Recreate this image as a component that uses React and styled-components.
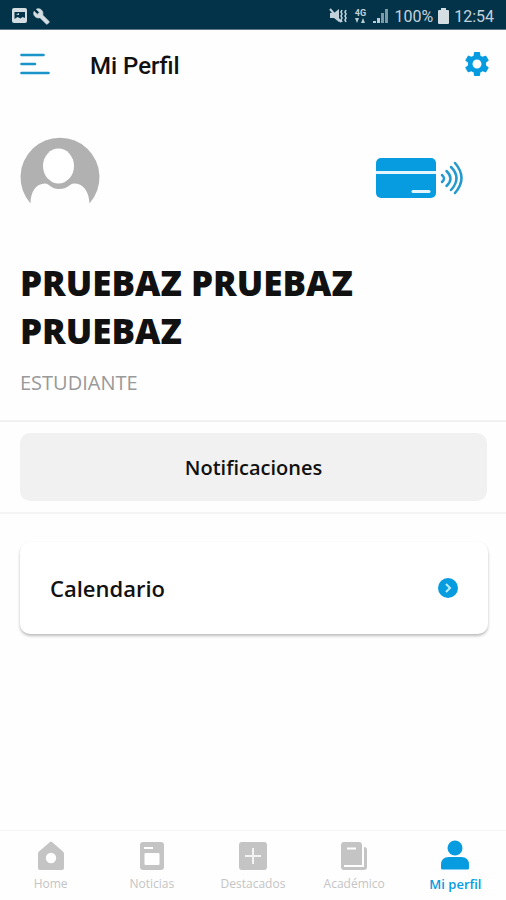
import styled, { createGlobalStyle } from "styled-components";

const tabs = [
    { label: "Home", icon: HomeIcon },
    { label: "Noticias", icon: NewsIcon },
    { label: "Destacados", icon: PlusIcon },
    { label: "Académico", icon: BookIcon },
    { label: "Mi perfil", icon: PersonIcon, active: true },
];

function App() {
    return (
        <Page>
            <GlobalStyle />
            <StatusBar>
                <StatusGroup>
                    <PictureIcon />
                    <WrenchIcon />
                </StatusGroup>
                <StatusGroup>
                    <MuteIcon />
                    <NetworkType>
                        <span>4G</span>
                        <ArrowsIcon />
                    </NetworkType>
                    <SignalIcon />
                    <span>100%</span>
                    <BatteryIcon />
                    <span>12:54</span>
                </StatusGroup>
            </StatusBar>
            <Header>
                <IconButton aria-label="Menú">
                    <MenuIcon />
                </IconButton>
                <h1>Mi Perfil</h1>
                <IconButton aria-label="Ajustes">
                    <GearIcon />
                </IconButton>
            </Header>
            <Main>
                <Profile>
                    <div className="top">
                        <AvatarIcon />
                        <IconButton aria-label="Credencial">
                            <CardIcon />
                        </IconButton>
                    </div>
                    <h2>PRUEBAZ PRUEBAZ PRUEBAZ</h2>
                    <p>ESTUDIANTE</p>
                </Profile>
                <Notifications>
                    <button>Notificaciones</button>
                </Notifications>
                <CardButton>
                    <span>Calendario</span>
                    <ChevronIcon />
                </CardButton>
            </Main>
            <TabBar>
                {tabs.map(({ label, icon: Icon, active }) => (
                    <Tab key={label} href="#" $active={active} aria-current={active ? "page" : undefined}>
                        <Icon />
                        <span>{label}</span>
                    </Tab>
                ))}
            </TabBar>
        </Page>
    )
}

export default App;

function PictureIcon() {
    return (
        <svg width="16" height="16" viewBox="0 0 16 16">
            <rect x="0" y="0" width="15" height="15" rx="2" fill="#d3dde2" />
            <path d="M2.500 4h10.500v6l-2.500-1-2 1.500-3-1.500-3 2z" fill="#033349" />
            <path d="M4 6.500l3-1.500v2z" fill="#d3dde2" />
        </svg>
    )
}

function WrenchIcon() {
    return (
        <svg width="17" height="17" viewBox="0 0 24 24" fill="#d3dde2" stroke="#d3dde2">
            <path d="M22.700 19l-9.100-9.100c.9-2.300.4-5-1.500-6.900-2-2-5-2.400-7.400-1.300L9 6 6 9 1.600 4.700C.4 7.100.9 10.100 2.900 12.100c1.900 1.900 4.600 2.400 6.900 1.500l9.100 9.100c.4.400 1 .4 1.400 0l2.300-2.300c.5-.4.500-1.100.1-1.400z" />
        </svg>
    )
}

function MuteIcon() {
    return (
        <svg width="17" height="16" viewBox="0 0 17 16">
            <path d="M0 5h4l5-4v13l-5-4H0z" fill="#c3d2da" />
            <path d="M0 1l11 13" stroke="#c3d2da" strokeWidth="2" />
            <path d="M12 2l-1 2 1 2-1 2 1 2-1 2 1 2M16 2l-1 2 1 2-1 2 1 2-1 2 1 2" stroke="#c3d2da" strokeWidth="1.600" fill="none" />
        </svg>
    )
}

function ArrowsIcon() {
    return (
        <svg width="10" height="5" viewBox="0 0 10 5" fill="#b9cbd4">
            <path d="M0 0h4L2 5zM6 5h4L8 0z" />
        </svg>
    )
}

function SignalIcon() {
    return (
        <svg width="16" height="16" viewBox="0 0 16 16">
            <path d="M0 13h3v2H0zM4 10h3v5H4z" fill="#b9cbd4" />
            <path d="M8 5h3v10H8zM12 1h3v14h-3z" fill="#7e99a6" />
        </svg>
    )
}

function BatteryIcon() {
    return (
        <svg width="11" height="16" viewBox="0 0 11 16" fill="#d3dde2">
            <path d="M3 0h5v2h2a1 1 0 0 1 1 1v12a1 1 0 0 1-1 1H1a1 1 0 0 1-1-1V3a1 1 0 0 1 1-1h2z" />
        </svg>
    )
}

function MenuIcon() {
    return (
        <svg width="30" height="22" viewBox="0 0 30 22" stroke="#1b94c9" strokeWidth="2.600" strokeLinecap="round">
            <path d="M1.500 2h22M1.500 11H15M1.500 20h27" />
        </svg>
    )
}

function GearIcon() {
    return (
        <svg width="30" height="30" viewBox="0 0 24 24" fill="#079be0">
            <path d="M19.140 12.940c.04-.3.060-.61.060-.94 0-.32-.02-.64-.07-.94l2.030-1.580c.18-.14.230-.41.120-.61l-1.920-3.320c-.12-.22-.37-.29-.59-.22l-2.390.96c-.5-.38-1.030-.7-1.620-.94l-.36-2.540c-.04-.24-.24-.41-.48-.41h-3.840c-.24 0-.43.170-.47.410l-.36 2.540c-.59.240-1.130.570-1.620.940l-2.390-.96c-.22-.08-.47 0-.59.220L2.740 8.870c-.12.210-.08.470.120.610l2.030 1.580c-.05.300-.09.630-.09.940s.02.640.070.940l-2.030 1.580c-.18.140-.23.410-.12.610l1.920 3.320c.12.220.37.290.59.220l2.390-.96c.5.380 1.030.7 1.620.94l.36 2.540c.05.240.24.410.48.410h3.840c.24 0 .44-.17.47-.41l.36-2.540c.59-.24 1.130-.56 1.620-.94l2.390.96c.22.080.47 0 .59-.22l1.920-3.320c.12-.22.070-.47-.12-.61l-2.010-1.580zM12 15.600c-1.980 0-3.600-1.620-3.600-3.600s1.620-3.600 3.600-3.600 3.600 1.620 3.600 3.600-1.620 3.600-3.600 3.600z" />
        </svg>
    )
}

function AvatarIcon() {
    return (
        <svg width="80" height="66" viewBox="0 0 80 66">
            <path d="M10.500 65.500A39.500 39.500 0 1 1 69.500 65.500C69 53 63 45.500 54 45.500C50 45.500 48 51 39 51C31 51 29 45.500 25 45.500C16 45.500 10.500 54 10.500 65.500Z" fill="#b1b1b1" />
            <ellipse cx="38.500" cy="28" rx="15.500" ry="17.500" fill="#fff" />
        </svg>
    )
}

function CardIcon() {
    return (
        <svg width="88" height="42" viewBox="0 0 88 42" fill="none" strokeLinecap="round">
            <rect x="0" y="1" width="60" height="40" rx="5" fill="#079be0" />
            <path d="M0 15.500h60" stroke="#e3f6ff" strokeWidth="3" strokeLinecap="butt" />
            <path d="M37 34.500h16" stroke="#e3f6ff" strokeWidth="3" />
            <path d="M66 18q4 3.500 0 7M70.500 14q8 7.500 0 15M75 10q11 11 0 23M79 6q13 15 0 30" stroke="#2499cd" strokeWidth="2.500" />
        </svg>
    )
}

function ChevronIcon() {
    return (
        <svg width="20" height="20" viewBox="0 0 20 20">
            <circle cx="10" cy="10" r="10" fill="#079be0" />
            <path d="M8 6l4 4-4 4" stroke="#b9ecff" strokeWidth="2" fill="none" />
        </svg>
    )
}

function HomeIcon() {
    return (
        <svg width="30" height="30" viewBox="0 0 30 30">
            <path d="M15 .5Q15.600.5 16 1L27 10.500Q28 11.300 28 12.500V27Q28 29 26 29H4Q2 29 2 27V12.500Q2 11.300 3 10.500L14 1Q14.400.5 15 .5Z" fill="currentColor" />
            <circle cx="15" cy="17" r="5.200" fill="#fff" />
        </svg>
    )
}

function NewsIcon() {
    return (
        <svg width="30" height="30" viewBox="0 0 30 30">
            <rect x="3" y="1" width="24" height="28" rx="3" fill="currentColor" />
            <path d="M7 7h9" stroke="#fff" strokeWidth="2" />
            <rect x="7.500" y="12" width="15" height="12" rx="1" fill="#fff" />
        </svg>
    )
}

function PlusIcon() {
    return (
        <svg width="30" height="30" viewBox="0 0 30 30">
            <rect x="1" y="1" width="28" height="28" rx="3" fill="currentColor" />
            <path d="M15 7v16M7 15h16" stroke="#f3f3f3" strokeWidth="2" />
        </svg>
    )
}

function BookIcon() {
    return (
        <svg width="30" height="30" viewBox="0 0 30 30">
            <path d="M5 1H20Q23 1 23 4V24H5V26H25V6Q28 6 28 9V26Q28 29 25 29H5Q2 29 2 26V4Q2 1 5 1Z" fill="currentColor" />
            <path d="M8 7.500h9" stroke="#fff" strokeWidth="2" />
        </svg>
    )
}

function PersonIcon() {
    return (
        <svg width="30" height="30" viewBox="0 0 30 30" fill="currentColor">
            <circle cx="15" cy="7" r="7.500" />
            <path d="M1 27V24Q1 16 9 16H21Q29 16 29 24V27Q29 28.500 27.500 28.500H2.500Q1 28.500 1 27Z" />
        </svg>
    )
}

const GlobalStyle = createGlobalStyle`
    * {
        box-sizing:border-box;
    }
    body {
        margin:0;
        background-color:#fefefe;
        color:#111;
        font-family:"Open Sans", sans-serif;
    }
    svg {
        display:block;
        flex-shrink:0;
        overflow:visible;
    }
    button {
        font-family:inherit;
        color:inherit;
        border:none;
        cursor:pointer;
    }
`;

const Page = styled.div`
    min-height:100vh;
    display:flex;
    flex-direction:column;
`;

const StatusBar = styled.div`
    height:30px;
    padding:3px 12px 0;
    display:flex;
    align-items:center;
    justify-content:space-between;
    background-color:#033349;
    color:#c3d2da;
    font-family:Roboto, sans-serif;
    font-size:16px;
    border-bottom:1px solid #5f7986;
`;

const StatusGroup = styled.div`
    display:flex;
    align-items:center;
    gap:5px;
`;

const NetworkType = styled.div`
    width:16px;
    display:flex;
    flex-direction:column;
    align-items:center;
    font-size:9px;
    line-height:9px;
    font-weight:700;
`;

const IconButton = styled.button`
    padding:0;
    background:none;
`;

const Header = styled.header`
    height:70px;
    padding:0 14px 2px 20px;
    display:flex;
    align-items:center;
    h1 {
        flex:1;
        margin:4px 0 0 40px;
        font-family:Roboto, sans-serif;
        font-size:24px;
        font-weight:500;
    }
`;

const Main = styled.main`
    flex:1;
`;

const Profile = styled.section`
    padding:38px 20px 23px;
    border-bottom:2px solid #f1f1f1;
    .top {
        display:flex;
        align-items:flex-end;
        justify-content:space-between;
        padding-right:22px;
    }
    .top button {
        padding-bottom:5px;
    }
    h2 {
        margin:55px 0 0;
        font-size:35px;
        line-height:48px;
        font-weight:800;
    }
    p {
        margin:14px 0 0;
        font-size:20px;
        line-height:28px;
        color:#999;
    }
`;

const Notifications = styled.section`
    padding:11px 19px 11px 20px;
    border-bottom:2px solid #f4f4f4;
    button {
        width:100%;
        height:68px;
        border-radius:10px;
        background-color:#f1f1f1;
        font-size:20px;
        font-weight:600;
    }
`;

const CardButton = styled.button`
    width:calc(100% - 38px);
    height:92px;
    margin:28px 18px 28px 20px;
    padding:0 30px;
    display:flex;
    align-items:center;
    justify-content:space-between;
    border-radius:10px;
    background-color:#fff;
    box-shadow:0 2px 3px rgba(0, 0, 0, .26);
    font-size:22px;
    font-weight:600;
`;

const TabBar = styled.nav`
    height:70px;
    padding-top:10px;
    display:flex;
    border-top:1px solid #f4f4f4;
`;

const Tab = styled.a`
    flex:1;
    display:flex;
    flex-direction:column;
    align-items:center;
    gap:4px;
    text-decoration:none;
    font-size:${({ $active }) => ($active ? "13px" : "12px")};
    line-height:18px;
    color:${({ $active }) => ($active ? "#079be0" : "#c4c4c4")};
    font-weight:${({ $active }) => ($active ? 600 : 400)};
`;
